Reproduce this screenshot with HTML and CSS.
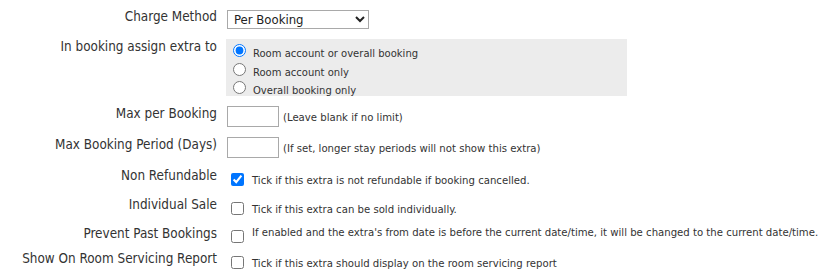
FILE: index.html
```html
<!DOCTYPE html>
<html lang="en">
<head>
    <meta charset="UTF-8">
    <meta name="viewport" content="width=device-width, initial-scale=1.0">
    <title>Extra Settings</title>
    <link rel="stylesheet" href="styles.css">
</head>
<body>
    <div class="extra-form">
        <!-- Charge method -->
        <div class="row">
            <label class="row-label" for="charge-method">Charge Method</label>
            <div class="row-field">
                <select id="charge-method" class="charge-select">
                    <option>Per Booking</option>
                    <option>Per Night</option>
                    <option>Per Person</option>
                </select>
            </div>
        </div>

        <!-- Assign extra to -->
        <div class="row">
            <div class="row-label">In booking assign extra to</div>
            <div class="row-field">
                <div class="assign-box">
                    <label class="radio-line"><input type="radio" name="assign" checked><span>Room account or overall booking</span></label>
                    <label class="radio-line"><input type="radio" name="assign"><span>Room account only</span></label>
                    <label class="radio-line"><input type="radio" name="assign"><span>Overall booking only</span></label>
                </div>
            </div>
        </div>

        <!-- Limits -->
        <div class="row">
            <label class="row-label" for="max-per-booking">Max per Booking</label>
            <div class="row-field input-field">
                <input type="text" id="max-per-booking" class="small-input">
                <span class="hint">(Leave blank if no limit)</span>
            </div>
        </div>
        <div class="row">
            <label class="row-label" for="max-period">Max Booking Period (Days)</label>
            <div class="row-field input-field">
                <input type="text" id="max-period" class="small-input">
                <span class="hint">(If set, longer stay periods will not show this extra)</span>
            </div>
        </div>

        <!-- Flags -->
        <div class="row">
            <label class="row-label" for="non-refundable">Non Refundable</label>
            <div class="row-field check-field">
                <input type="checkbox" id="non-refundable" checked>
                <span class="hint">Tick if this extra is not refundable if booking cancelled.</span>
            </div>
        </div>
        <div class="row">
            <label class="row-label" for="individual-sale">Individual Sale</label>
            <div class="row-field check-field">
                <input type="checkbox" id="individual-sale">
                <span class="hint">Tick if this extra can be sold individually.</span>
            </div>
        </div>
        <div class="row row-tight">
            <label class="row-label" for="prevent-past">Prevent Past Bookings</label>
            <div class="row-field check-field check-top">
                <input type="checkbox" id="prevent-past">
                <span class="hint">If enabled and the extra's from date is before the current date/time, it will be changed to the current date/time.</span>
            </div>
        </div>
        <div class="row">
            <label class="row-label" for="servicing-report">Show On Room Servicing Report</label>
            <div class="row-field check-field">
                <input type="checkbox" id="servicing-report">
                <span class="hint">Tick if this extra should display on the room servicing report</span>
            </div>
        </div>
    </div>
</body>
</html>
```

FILE: styles.css
```css
body {
    margin: 0;
    padding: 0;
    font-family: "DejaVu Sans Condensed", "DejaVu Sans", sans-serif;
    color: #333;
    background: #fff;
}

.extra-form {
    padding-top: 9px;
}

.row {
    display: flex;
    min-height: 19px;
    margin-bottom: 10px;
}

.row-tight {
    margin-bottom: 6px;
}

.row-label {
    width: 217px;
    flex-shrink: 0;
    text-align: right;
    font-size: 13.4px;
    line-height: 16px;
}

.row-field {
    margin-left: 10px;
    font-size: 11.25px;
    line-height: 13px;
}

.charge-select {
    width: 142px;
    height: 19px;
    margin-top: 1px;
    padding: 0 2px;
    font-family: "DejaVu Sans Condensed", "DejaVu Sans", sans-serif;
    font-size: 13px;
    color: #222;
    background: #fff;
    border: 1px solid #a9a9a9;
}

.assign-box {
    width: 401px;
    height: 57px;
    margin-left: -1px;
    padding-top: 5px;
    box-sizing: border-box;
    background: #ececec;
}

.radio-line {
    display: flex;
    align-items: flex-start;
    height: 18.5px;
}

.radio-line input {
    width: 13px;
    height: 13px;
    margin: 0 7px 0 7px;
}

.radio-line span {
    margin-top: 3px;
    font-family: "DejaVu Sans", sans-serif;
    font-size: 10px;
}

.input-field {
    display: flex;
    align-items: baseline;
}

.small-input {
    width: 52px;
    height: 21px;
    box-sizing: border-box;
    margin: 0 4px 0 0;
    border: 1px solid #a9a9a9;
    padding: 0 3px;
}

.check-field {
    display: flex;
    align-items: flex-start;
}

.check-field input {
    width: 13px;
    height: 13px;
    margin: 5px 8px 0 4px;
}

.check-field .hint {
    margin-top: 6px;
}

.check-top input {
    margin-top: 4px;
}

.check-top .hint {
    margin-top: 0;
}
```
